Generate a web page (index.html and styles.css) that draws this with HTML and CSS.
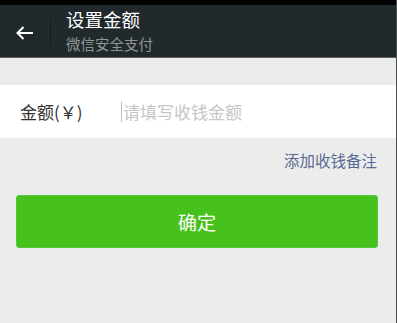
FILE: index.html
```html
<!DOCTYPE html>
<html lang="zh-CN">
<head>
  <meta charset="UTF-8">
  <meta name="viewport" content="width=device-width, initial-scale=1.0">
  <title>设置金额</title>
  <link rel="stylesheet" href="styles.css">
</head>
<body>

  <div class="page">
    <div class="statusbar"></div>
    <div class="header">
      <div class="back">
        <svg width="18" height="14" viewBox="0 0 18 14">
          <path d="M1.5 7 H17 M7.5 1 L1.5 7 L7.5 13" fill="none" stroke="#fff" stroke-width="2"/>
        </svg>
      </div>
      <div class="divider"></div>
      <div class="titles">
        <div class="title">设置金额</div>
        <div class="subtitle">微信安全支付</div>
      </div>
    </div>

    <div class="row">
      <label class="label">金额(￥)</label>
      <span class="caret"></span>
      <input type="text" class="amount" placeholder="请填写收钱金额">
    </div>

    <div class="note"><a href="#">添加收钱备注</a></div>

    <button class="ok">确定</button>
  </div>

</body>
</html>
```

FILE: styles.css
```css
html, body {
  margin: 0;
  padding: 0;
}
body {
  font-family: "Noto Sans CJK SC", "Noto Sans", sans-serif;
  background-color: #ececec;
}
.page {
  width: 396px;
  height: 323px;
  border-right: 1px solid #4a4f52;
  background-color: #ececec;
}
.statusbar {
  height: 5px;
  background-color: #000;
}
.header {
  height: 52px;
  background-color: #21292c;
  border-bottom: 1px solid #5a5f61;
  display: flex;
  align-items: center;
}
.back {
  width: 50px;
  display: flex;
  justify-content: center;
  padding-top: 3px;
}
.divider {
  width: 1px;
  height: 25px;
  margin-top: 3px;
  background-color: #151b1d;
}
.titles {
  margin-left: 15px;
  margin-top: -2px;
}
.title {
  color: #fff;
  font-size: 18.5px;
  line-height: 24px;
}
.subtitle {
  color: #8f9597;
  font-size: 14.5px;
  line-height: 20px;
  margin-top: 3px;
}
.row {
  margin-top: 27px;
  height: 53px;
  background-color: #fff;
  display: flex;
  align-items: center;
  padding-left: 20px;
}
.label {
  width: 101px;
  font-size: 17px;
  color: #333;
  padding-bottom: 1px;
}
.caret {
  width: 1px;
  height: 20px;
  background-color: #bdbdbd;
}
.amount {
  flex: 1;
  border: none;
  outline: none;
  font-family: inherit;
  font-size: 17px;
  padding: 0 0 1px 1px;
  background: transparent;
}
.amount::placeholder {
  color: #c6c6c6;
}
.note {
  text-align: right;
  padding: 10px 19px 0 0;
  height: 47px;
  box-sizing: border-box;
}
.note a {
  color: #596a93;
  font-size: 15.5px;
  text-decoration: none;
  line-height: 22px;
}
.ok {
  display: block;
  width: 362px;
  height: 53px;
  margin-left: 16px;
  margin-top: 10px;
  border: 1px solid #54c93a;
  border-radius: 3px;
  background-color: #47c21d;
  color: #fff;
  font-family: inherit;
  font-size: 19px;
  cursor: pointer;
}
```
